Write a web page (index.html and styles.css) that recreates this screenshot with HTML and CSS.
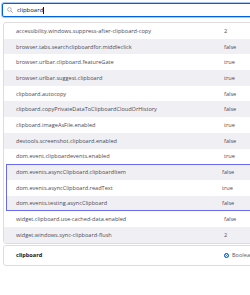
FILE: index.html
```html
<!DOCTYPE html>
<html lang="en">
<head>
    <meta charset="UTF-8">
    <title>about:config</title>
    <link rel="stylesheet" href="styles.css">
</head>
<body>
<div class="page">
    <label class="search">
        <svg class="search-icon" width="6" height="6" viewBox="0 0 16 16">
            <circle cx="6.5" cy="6.5" r="5" fill="none" stroke="#8f8f9d" stroke-width="1.8"/>
            <path d="M10.2 10.2 L15 15" stroke="#8f8f9d" stroke-width="1.8" stroke-linecap="round"/>
        </svg>
        <span class="search-text">clipboard</span><span class="caret"></span>
    </label>
    <div class="prefs">
        <div class="row"><span class="name">accessibility.windows.suppress-after-clipboard-copy</span><span class="value">2</span></div>
        <div class="row"><span class="name">browser.tabs.searchclipboardfor.middleclick</span><span class="value">false</span></div>
        <div class="row"><span class="name">browser.urlbar.clipboard.featureGate</span><span class="value">true</span></div>
        <div class="row"><span class="name">browser.urlbar.suggest.clipboard</span><span class="value">true</span></div>
        <div class="row"><span class="name">clipboard.autocopy</span><span class="value">false</span></div>
        <div class="row"><span class="name">clipboard.copyPrivateDataToClipboardCloudOrHistory</span><span class="value">false</span></div>
        <div class="row"><span class="name">clipboard.imageAsFile.enabled</span><span class="value">true</span></div>
        <div class="row"><span class="name">devtools.screenshot.clipboard.enabled</span><span class="value">false</span></div>
        <div class="row"><span class="name">dom.event.clipboardevents.enabled</span><span class="value">true</span></div>
        <div class="group">
            <div class="row"><span class="name">dom.events.asyncClipboard.clipboardItem</span><span class="value">false</span></div>
            <div class="row"><span class="name">dom.events.asyncClipboard.readText</span><span class="value">true</span></div>
            <div class="row"><span class="name">dom.events.testing.asyncClipboard</span><span class="value">false</span></div>
        </div>
        <div class="row"><span class="name">widget.clipboard.use-cached-data.enabled</span><span class="value">false</span></div>
        <div class="row"><span class="name">widget.windows.sync-clipboard-flush</span><span class="value">2</span></div>
    </div>
    <div class="add-row">
        <span class="name">clipboard</span>
        <span class="type"><span class="radio"></span>Boolean</span>
    </div>
</div>
</body>
</html>
```

FILE: styles.css
```css
html, body {
    margin: 0;
    overflow: hidden;
}
body {
    font-family: "Open Sans", "Noto Sans", sans-serif;
    font-size: 5.6px;
    color: #4a4a55;
    background: #fff;
}
.page {
    width: 290px;
    padding: 3px 0 0 2px;
}
.search {
    display: flex;
    align-items: center;
    height: 12px;
    border: 1px solid #0061e0;
    box-shadow: 0 0 0 1px #a9c8f3;
    border-radius: 2px;
    padding-left: 4px;
    font-size: 6px;
    color: #15141a;
}
.search-icon {
    margin-right: 4px;
}
.caret {
    display: inline-block;
    width: 1px;
    height: 7px;
    background: #15141a;
}
.prefs {
    margin: 5px 0 0 1px;
    border: 1px solid #dcdce2;
    border-radius: 3px;
}
.row {
    display: flex;
    align-items: center;
    height: 15.7px;
}
.row:nth-child(even),
.group .row:nth-child(odd) {
    background: #f0f0f4;
}
.group .row:nth-child(even) {
    background: #fff;
}
.name {
    width: 208px;
    padding-left: 12px;
    flex: none;
}
.value {
    flex: 1;
}
.group {
    outline: 1.5px solid #6a6af0;
    outline-offset: -1px;
    margin: 0 2px;
}
.group .name {
    width: 206px;
    padding-left: 10px;
}
.add-row {
    display: flex;
    align-items: center;
    height: 19px;
    margin: 1px 0 0 1px;
    border: 1px solid #dcdce2;
    border-radius: 3px;
    font-weight: bold;
    color: #15141a;
}
.type {
    display: flex;
    align-items: center;
    font-weight: normal;
    color: #5b5b66;
}
.radio {
    width: 3px;
    height: 3px;
    border: 1.5px solid #0061e0;
    border-radius: 50%;
    background: #0061e0;
    box-shadow: inset 0 0 0 1px #fff;
    margin-right: 3px;
}
```
